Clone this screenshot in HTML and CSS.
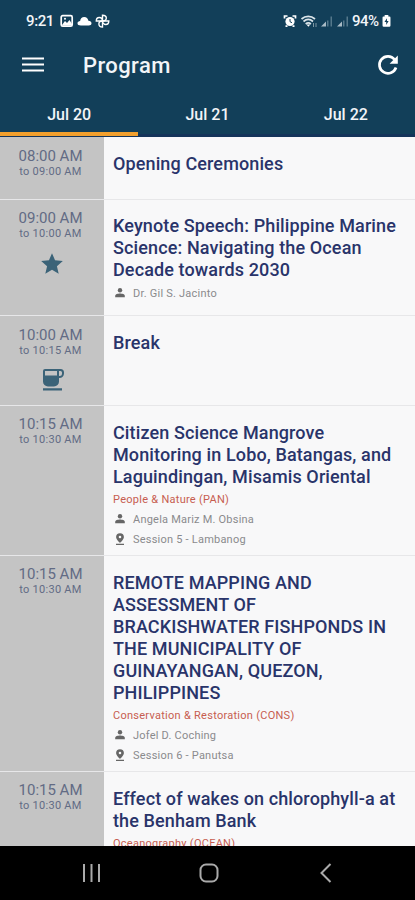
FILE: index.html
```html
<!DOCTYPE html>
<html lang="en">
<head>
<meta charset="utf-8">
<title>Program</title>
<link rel="stylesheet" href="styles.css">
</head>
<body>
<svg width="0" height="0" class="defs">
  <symbol id="person" viewBox="0 0 12 12"><circle cx="6" cy="3.2" r="2.2"/><path d="M1.2 10.2V8.9C1.2 7.3 4 6.6 6 6.6s4.8.7 4.8 2.3v1.3z"/></symbol>
  <symbol id="place" viewBox="0 0 12 12"><path fill-rule="evenodd" d="M6 .2a3.9 3.9 0 0 0-3.900 3.900C2.100 6.800 6 10 6 10s3.900-3.200 3.900-5.900A3.900 3.900 0 0 0 6 .2zm0 2.500a1.300 1.300 0 1 1 0 2.600 1.300 1.300 0 0 1 0-2.600zM2 10.700h8v1.200H2z"/></symbol>
</svg>
<div class="app">
  <header class="header">
    <div class="status">
      <span class="clock">9:21</span>
      <svg class="status-left" viewBox="0 0 52 16" width="52" height="16">
        <rect x="1.200" y="2.700" width="11" height="10.500" rx="1.500" fill="none" stroke="#fff" stroke-width="1.700"/>
        <path d="M2 12l3-4 2 2 2.500-3L12 11v1.500H2z" fill="#fff"/><circle cx="5" cy="5.700" r="1" fill="#fff"/>
        <path d="M21 12.500c-2.500 0-3.500-1-3.500-2.300 0-1.400 1.200-2.200 2.600-2.300C20.500 5.400 22 4 24.200 4c2.300 0 3.800 1.500 4.200 3.800 1.800.1 3.100 1 3.100 2.500 0 1.400-1.100 2.200-2.800 2.200z" fill="#fff"/>
        <g fill="none" stroke="#fff" stroke-width="1.400"><path d="M42.500 8V2.200c2.500 0 3.800 1.200 3.800 2.900S44.800 8 42.500 8z"/><path d="M42.500 8h6.300c0 2.300-1.300 3.500-3 3.500S42.500 10 42.500 8z"/><path d="M42.500 8v6c-2.500 0-3.600-1.300-3.600-3S40.300 8 42.500 8z"/><path d="M42.500 8h-6.200c0-2.300 1.200-3.500 3-3.500s3.200 1.500 3.200 3.500z"/></g>
      </svg>
      <svg class="status-right" viewBox="0 0 67 16" width="67" height="16">
        <circle cx="7" cy="8.500" r="4.600" fill="#fff"/><path d="M1.500 5.500V3h3M12.500 5.500V3h-3M2.500 13.200h2M9.500 13.200h2" stroke="#fff" stroke-width="1.700" fill="none"/><path d="M7 6v2.700l2 1" stroke="#123f59" fill="none"/>
        <g fill="none" stroke="#dbe5ea" stroke-width="1.700"><path d="M18.500 6c4-3.600 9.500-3.600 13.500 0"/><path d="M20.500 8.500c3-2.600 6.500-2.600 9.500 0"/><path d="M22.700 11c1.700-1.500 3.500-1.500 5.200 0"/></g><path d="M23.500 11.500l1.900 2.200 1.900-2.200z" fill="#fff"/><path d="M30.500 10v4M33 10v4" stroke="#7f98a5"/>
        <g fill="#a9bbc5"><path d="M38 13.500l5-5v5z"/><path d="M54 13.500l5-5v5z"/></g><g fill="#54788b"><path d="M44 7.500h1.500v6H44zM47.500 3.500H49v10h-1.500zM60 7.500h1.500v6H60zM63.500 3.500H65v10h-1.500z"/></g>
      </svg>
      <span class="percent">94%</span>
      <svg class="battery" viewBox="0 0 9 13" width="9" height="12"><path d="M2.500 0h4v1.500h1A1.300 1.300 0 0 1 8.800 3v8.500a1.300 1.300 0 0 1-1.300 1.300h-6A1.300 1.300 0 0 1 .2 11.500V3a1.300 1.300 0 0 1 1.300-1.500h1z" fill="#fff"/><path d="M5 3.500L2.300 7.600h1.900v3.200l2.600-4.300H5z" fill="#123f59"/></svg>
    </div>
    <div class="toolbar">
      <svg class="menu" viewBox="0 0 22 16" width="22" height="16"><path d="M0 1.500h22M0 7.500h22M0 13.500h22" stroke="#fff" stroke-width="2.200"/></svg>
      <h1 class="heading">Program</h1>
      <svg class="refresh" viewBox="0 0 22 22" width="22" height="22"><path d="M17.600 5.500A8.500 8.500 0 1 0 19 13.500" fill="none" stroke="#fff" stroke-width="2.700"/><path d="M20.800 1.500v8.200h-8.200z" fill="#fff"/></svg>
    </div>
    <nav class="tabs"><a class="tab active">Jul 20</a><a class="tab">Jul 21</a><a class="tab">Jul 22</a></nav>
  </header>
  <main class="list">
    <article class="row r1"><div class="time"><b>08:00 AM</b><small>to 09:00 AM</small></div>
      <div class="info"><h2>Opening Ceremonies</h2></div></article>
    <article class="row r2"><div class="time"><b>09:00 AM</b><small>to 10:00 AM</small>
        <svg class="mark" viewBox="0 0 24 24" width="26" height="26"><path d="M12 17.270L18.180 21l-1.640-7.030L22 9.240l-7.190-.61L12 2 9.190 8.630 2 9.240l5.460 4.730L5.820 21z"/></svg></div>
      <div class="info"><h2>Keynote Speech: Philippine Marine<br>Science: Navigating the Ocean<br>Decade towards 2030</h2>
        <p class="meta first"><svg><use href="#person"/></svg><span>Dr. Gil S. Jacinto</span></p></div></article>
    <article class="row r3"><div class="time"><b>10:00 AM</b><small>to 10:15 AM</small>
        <svg class="mark cup" viewBox="0 0 22 22" width="22" height="22"><path fill-rule="evenodd" d="M3 0h15.500A3.500 3.500 0 0 1 22 3.500v1A4.500 4.500 0 0 1 17.500 9H17v3.500a5 5 0 0 1-5 5H6a5 5 0 0 1-5-5V2a2 2 0 0 1 2-2zm0 2v4.500h12V2zm14 0v5h.5A2.500 2.500 0 0 0 20 4.500v-1A1.500 1.500 0 0 0 18.500 2zM1 19.300h19v2.200H1z"/></svg></div>
      <div class="info"><h2>Break</h2></div></article>
    <article class="row r4"><div class="time"><b>10:15 AM</b><small>to 10:30 AM</small></div>
      <div class="info"><h2>Citizen Science Mangrove<br>Monitoring in Lobo, Batangas, and<br>Laguindingan, Misamis Oriental</h2>
        <p class="track">People &amp; Nature (PAN)</p>
        <p class="meta"><svg><use href="#person"/></svg><span>Angela Mariz M. Obsina</span></p>
        <p class="meta"><svg><use href="#place"/></svg><span>Session 5 - Lambanog</span></p></div></article>
    <article class="row r5"><div class="time"><b>10:15 AM</b><small>to 10:30 AM</small></div>
      <div class="info"><h2>REMOTE MAPPING AND<br>ASSESSMENT OF<br>BRACKISHWATER FISHPONDS IN<br>THE MUNICIPALITY OF<br>GUINAYANGAN, QUEZON,<br>PHILIPPINES</h2>
        <p class="track">Conservation &amp; Restoration (CONS)</p>
        <p class="meta"><svg><use href="#person"/></svg><span>Jofel D. Coching</span></p>
        <p class="meta"><svg><use href="#place"/></svg><span>Session 6 - Panutsa</span></p></div></article>
    <article class="row r6"><div class="time"><b>10:15 AM</b><small>to 10:30 AM</small></div>
      <div class="info"><h2>Effect of wakes on chlorophyll-a at<br>the Benham Bank</h2>
        <p class="track">Oceanography (OCEAN)</p></div></article>
  </main>
  <footer class="navbar">
    <svg viewBox="0 0 20 20" width="20" height="20"><path d="M2 1v18M9.500 1v18M17 1v18"/></svg>
    <svg viewBox="0 0 20 20" width="20" height="20"><rect x="1.500" y="1.500" width="17" height="17" rx="5.500"/></svg>
    <svg viewBox="0 0 20 20" width="20" height="20"><path d="M14.500 1L5.500 10l9 9"/></svg>
  </footer>
</div>
</body>
</html>
```
FILE: styles.css
```css
* { box-sizing: border-box; margin: 0; padding: 0; }
body { width: 415px; height: 900px; overflow: hidden; font-family: Roboto, sans-serif; }
svg { display: block; flex: none; }
.defs { position: absolute; }
.app { display: flex; flex-direction: column; height: 900px; }
.header { flex: none; height: 137px; background: #123f59; color: #f2f5f8; }
.status { display: flex; align-items: center; height: 41px; padding: 0 24px 0 26px; font-size: 15px; font-weight: 500; }
.clock { width: 34px; letter-spacing: -0.4px; }
.status-right { margin-left: auto; }
.percent { margin-left: 2px; width: 29px; letter-spacing: -0.5px; }
.battery { margin: 1px 0 0 1px; }
.toolbar { display: flex; align-items: center; height: 48px; padding: 0 16px 0 22px; }
.heading { margin-left: 39px; padding-top: 1px; font-size: 22px; font-weight: 500; line-height: 47px; letter-spacing: 0.4px; }
.refresh { margin-left: auto; }
.tabs { display: grid; grid-template-columns: repeat(3, 1fr); height: 48px; border-bottom: 3px solid #14345a; }
.tab { height: 47px; padding-top: 16px; text-align: center; font-size: 16px; font-weight: 500; line-height: 20px; }
.active { border-bottom: 4px solid #f2a02e; }
.list { flex: 1; min-height: 0; overflow: hidden; background: #f8f8f9; }
.row { display: grid; grid-template-columns: 104px 1fr; border-bottom: 1px solid #e7e7e9; }
.r1 { height: 63px; }
.r1 .time { padding-top: 10px; }
.r1 .info { padding-top: 16px; }
.r2 { height: 116px; }
.r3 { height: 90px; }
.r3 .time { padding-top: 10px; }
.r3 .info { padding-top: 16px; }
.r4 { height: 150px; }
.r5 { height: 216px; }
.r6 { height: 90px; }
.time { display: flex; flex-direction: column; align-items: center; padding-top: 9px; padding-right: 3px; background: #c4c4c4; color: #626b84; }
.time b { font-size: 15px; font-weight: 400; line-height: 18px; }
.time small { font-size: 11px; line-height: 13px; letter-spacing: 0.27px; }
.mark { margin: 11px 0 0 3px; fill: #3b6378; }
.cup { margin-top: 12px; margin-left: 4px; }
.info { padding: 16px 0 0 9px; white-space: nowrap; }
.r2 .info { padding-top: 15px; }
h2 { font-size: 18px; font-weight: 500; line-height: 22px; letter-spacing: 0.12px; color: #29346a; }
.track { margin-bottom: -3px; font-size: 11px; line-height: 24px; letter-spacing: 0.27px; color: #c75d50; }
.meta { display: flex; align-items: center; gap: 7px; height: 20px; font-size: 11px; letter-spacing: 0.22px; color: #8a8a8d; }
.first { margin-top: 2px; }
.meta svg { width: 12px; height: 12px; margin-left: 1px; fill: #666; }
.navbar { display: grid; grid-template-columns: repeat(3, 117px); justify-content: center; align-items: center; justify-items: center; flex: none; height: 54px; padding-left: 2px; background: #000; }
.navbar svg { fill: none; stroke: #aaa; stroke-width: 2; }
```
